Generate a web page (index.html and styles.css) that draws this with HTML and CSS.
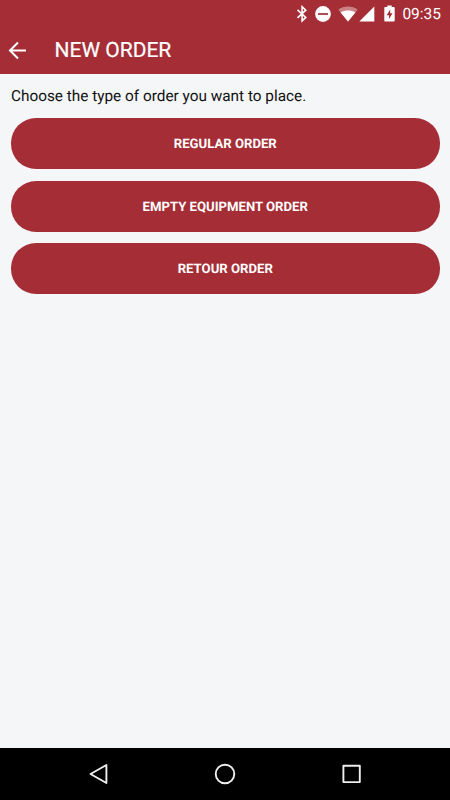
FILE: index.html
```html
<!DOCTYPE html>
<html lang="en">
<head>
  <meta charset="UTF-8" />
  <meta name="viewport" content="width=device-width, initial-scale=1" />
  <title>New Order</title>
  <link rel="stylesheet" href="styles.css">
</head>
<body>

<div class="screen">
  <header class="header">
    <div class="status-bar">
      <svg class="bluetooth" width="12" height="18" viewBox="0 0 12 18" fill="none" stroke="#fff" stroke-width="1.6">
        <path d="M1.5 4.8 9.8 12.4 6.1 15.9V1.7L9.8 5.2 1.5 12.8" />
      </svg>
      <svg class="dnd" width="16" height="16" viewBox="0 0 16 16">
        <circle cx="8" cy="8" r="7.9" fill="#fff" />
        <path d="M3 8h10" stroke="#a52d36" stroke-width="1.7" />
      </svg>
      <svg class="wifi" width="20" height="16" viewBox="0 0 20 16">
        <path d="M.4 3.7C5.7-.7 14.3-.7 19.6 3.7L10 15.5z" fill="#fff" fill-opacity=".4" />
        <path d="M2.6 6.4c4.4-2.6 10.4-2.6 14.8 0L10 15.5z" fill="#fff" />
      </svg>
      <svg class="signal" width="16" height="16" viewBox="0 0 16 16">
        <path d="M.3 15.5 15.3.5v15z" fill="#fff" />
      </svg>
      <svg class="battery" width="11" height="17" viewBox="0 0 11 17">
        <path d="M3.3.5h4.4V2h2.1q.9 0 .9.9v12.7q0 .9-.9.9H1.2q-.9 0-.9-.9V2.9Q.3 2 1.2 2h2.1z" fill="#fff" />
        <path d="M6.2 4.5 2.6 10.2H5V14l3.5-5.7H6.2z" fill="#a52d36" />
      </svg>
      <span class="time">09:35</span>
    </div>
    <div class="toolbar">
      <svg class="back" width="20" height="20" viewBox="0 0 20 20" fill="none" stroke="#fff" stroke-width="2">
        <path d="M18 10.5H2.5M10 2.5l-8 8 8 8" />
      </svg>
      <h1>NEW ORDER</h1>
    </div>
  </header>

  <main class="content">
    <p>Choose the type of order you want to place.</p>
    <div class="buttons">
      <button>REGULAR ORDER</button>
      <button>EMPTY EQUIPMENT ORDER</button>
      <button>RETOUR ORDER</button>
    </div>
  </main>

  <!-- Android navigation -->
  <nav class="nav-bar">
    <svg width="22" height="22" viewBox="0 0 22 22" fill="none" stroke="#eee" stroke-width="1.9" stroke-linejoin="round">
      <path d="M18.4 2v18L2.5 11z" />
    </svg>
    <svg width="22" height="22" viewBox="0 0 22 22" fill="none" stroke="#eee" stroke-width="1.9">
      <circle cx="11" cy="11" r="9.3" />
    </svg>
    <svg width="22" height="22" viewBox="0 0 22 22" fill="none" stroke="#eee" stroke-width="1.9" stroke-linejoin="round">
      <path d="M2.4 2.7h16.4v16.4H2.4z" />
    </svg>
  </nav>
</div>

</body>
</html>
```

FILE: styles.css
```css
body {
  margin: 0;
  font-family: Roboto, sans-serif;
  background-color: #f4f6f8;
  color: #111;
  text-rendering: geometricPrecision;
}
svg {
  display: block;
  flex: none;
}
.screen {
  height: 100vh;
  display: flex;
  flex-direction: column;
}
.header {
  height: 74px;
  background-color: #a52d36;
  color: white;
}
.status-bar {
  height: 27px;
  display: flex;
  align-items: center;
  justify-content: flex-end;
  padding-right: 9px;
}
.dnd {
  margin-left: 7px;
}
.wifi {
  margin-left: 7px;
}
.signal {
  margin-left: 1px;
}
.battery {
  margin-left: 9px;
}
.time {
  margin-left: 7px;
  font-size: 15.5px;
  line-height: 28px;
}
.toolbar {
  height: 46px;
  display: flex;
  align-items: center;
  padding-left: 8px;
}
.toolbar h1 {
  margin: 0 0 0 26.5px;
  padding-top: 1px;
  font-size: 21px;
  font-weight: 400;
  -webkit-text-stroke: 0.2px white;
}
.content {
  flex: 1;
  padding: 12px 10.5px 11px 11px;
}
.content p {
  margin: 0;
  font-size: 15.35px;
  line-height: 21px;
}
.buttons {
  display: flex;
  flex-direction: column;
  gap: 11.3px;
  margin-top: 11.3px;
}
button {
  height: 51px;
  padding: 2px 0 0;
  border: none;
  border-radius: 25px;
  background-color: #a52d36;
  color: white;
  font-family: inherit;
  font-size: 13.15px;
  font-weight: 700;
  text-rendering: inherit;
  cursor: pointer;
}
.nav-bar {
  height: 52.4px;
  display: flex;
  align-items: center;
  justify-content: center;
  gap: 104.5px;
  background-color: #000;
}
```
